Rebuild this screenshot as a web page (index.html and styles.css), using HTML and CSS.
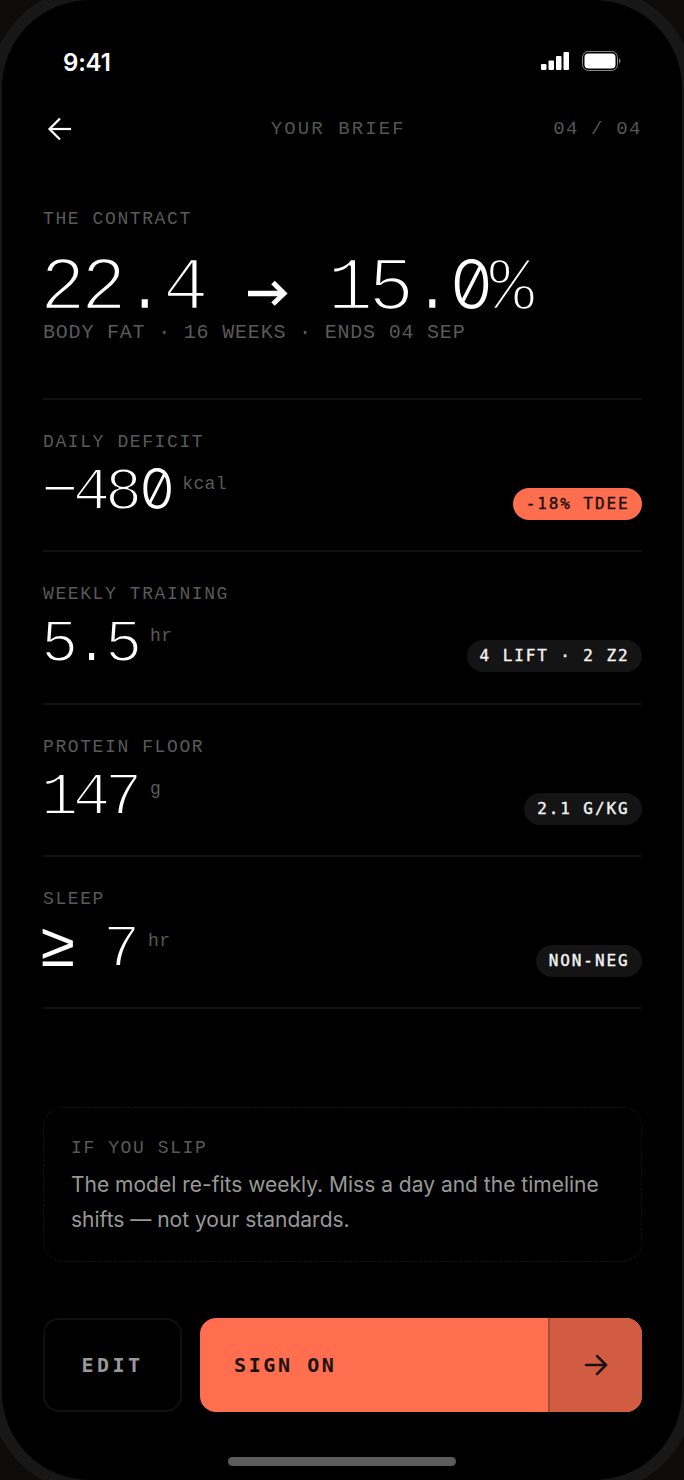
FILE: index.html
```html
<!DOCTYPE html>
<html lang="en">
<head>
  <meta charset="UTF-8">
  <meta name="viewport" content="width=device-width, initial-scale=1.0">
  <title>Your brief</title>
  <link rel="stylesheet" href="styles.css">
</head>
<body>
  <div class="bezel">
    <div class="screen">
      <div class="status">
        <span class="clock">9:41</span>
        <svg class="status-icons" width="80" height="20" viewBox="0 0 80 20">
          <rect x="0" y="13" width="5.500" height="6" rx="1" fill="#fff"/>
          <rect x="7.500" y="9.500" width="5.500" height="9.500" rx="1" fill="#fff"/>
          <rect x="15" y="5" width="5.500" height="14" rx="1" fill="#fff"/>
          <rect x="22.500" y="1" width="5.500" height="18" rx="1" fill="#fff"/>
          <rect x="41.500" y="0.500" width="35" height="19" rx="6" fill="none" stroke="#888"/>
          <rect x="43.500" y="2.500" width="31" height="15" rx="4" fill="#fff"/>
          <path d="M78 7.500v5c1-.4 1.500-1.400 1.500-2.500S79 7.900 78 7.500z" fill="#888"/>
        </svg>
      </div>

      <div class="nav">
        <svg class="back" width="26" height="26" viewBox="0 0 26 26" fill="none" stroke="#fff" stroke-width="2.200">
          <path d="M24 13H3"/>
          <path d="M13 2.500L2.500 13 13 23.500"/>
        </svg>
        <span class="nav-title">YOUR BRIEF</span>
        <span class="nav-step">04 / 04</span>
      </div>

      <div class="contract">
        <div class="label">THE CONTRACT</div>
        <div class="hero">22.4 <svg class="hero-arrow" width="41" height="26" viewBox="0 0 41 26" fill="none" stroke="#fff"><path d="M1 13.500H37" stroke-width="5.500"/><path d="M26 2.500L37 13.500 26 24" stroke-width="5"/></svg> 15.<span class="zero">0</span>%</div>
        <div class="hero-sub">BODY FAT · 16 WEEKS · ENDS 04 SEP</div>
      </div>

      <div class="row">
        <div class="label">DAILY DEFICIT</div>
        <div class="row-body">
          <div class="value">−48<span class="zero">0</span><span class="unit">kcal</span></div>
          <span class="pill pill-hot">-18% TDEE</span>
        </div>
      </div>
      <div class="row">
        <div class="label">WEEKLY TRAINING</div>
        <div class="row-body">
          <div class="value">5.5<span class="unit">hr</span></div>
          <span class="pill">4 LIFT · 2 Z2</span>
        </div>
      </div>
      <div class="row">
        <div class="label">PROTEIN FLOOR</div>
        <div class="row-body">
          <div class="value">147<span class="unit">g</span></div>
          <span class="pill">2.1 G/KG</span>
        </div>
      </div>
      <div class="row">
        <div class="label">SLEEP</div>
        <div class="row-body">
          <div class="value"><span class="geq">≥</span> 7<span class="unit">hr</span></div>
          <span class="pill">NON-NEG</span>
        </div>
      </div>

      <div class="slip">
        <div class="label">IF YOU SLIP</div>
        <p>The model re-fits weekly. Miss a day and the timeline shifts — not your standards.</p>
      </div>

      <div class="actions">
        <button class="btn-edit">EDIT</button>
        <button class="btn-sign">
          <span class="sign-text">SIGN ON</span>
          <span class="sign-arrow">
            <svg width="24" height="24" viewBox="0 0 24 24" fill="none" stroke="#1a1210" stroke-width="2.500" stroke-linecap="round" stroke-linejoin="round">
              <path d="M2 12h20"/>
              <path d="M13 3l9 9-9 9"/>
            </svg>
          </span>
        </button>
      </div>

      <div class="home-bar"></div>
    </div>
  </div>
</body>
</html>
```

FILE: styles.css
```css
html, body { height: 100%; margin: 0; overflow: hidden; }
body { background: #0e0c0b; font-family: 'Liberation Mono', monospace; }
button { cursor: pointer; font-family: inherit; border: none; padding: 0; }

/* phone frame runs past the window edges */
.bezel {
  width: 680px; height: 1480px; margin: -12px 0 0 -10px; padding: 12px;
  background: #171717; border-radius: 100px;
}
.screen {
  height: 100%; background: #000; border-radius: 88px; box-sizing: border-box;
  padding: 0 40.500px 0 41px; display: flex; flex-direction: column; color: #fff;
}

.status { display: flex; justify-content: space-between; align-items: center; height: 24px; margin-top: 50px; padding: 0 0 0 20px; }
.clock { font: 600 24px 'Inter', sans-serif; letter-spacing: -0.2px; }
.status-icons { margin-right: 21px; margin-top: -2px; }

.nav { display: grid; grid-template-columns: 1fr auto 1fr; align-items: center; height: 30px; margin-top: 40px; }
.back { margin-left: 4px; }
.nav-title { font-size: 19px; letter-spacing: 2.100px; color: #555; margin-left: -8px; }
.nav-step { font-size: 19px; letter-spacing: 1.200px; color: #555; justify-self: end; }

.label { font-size: 18px; line-height: 20px; letter-spacing: 1.600px; color: #5a5a5a; }

.contract { margin-top: 65px; height: 191px; border-bottom: 2px solid #101010; box-sizing: border-box; }
.hero {
  font-size: 76px; line-height: 66px; letter-spacing: -4.600px; margin: 22px 0 0 -3px;
  white-space: pre; -webkit-text-stroke: 2.600px #000; paint-order: fill stroke;
}
.hero-arrow { vertical-align: 3px; margin: 0 -1.600px 0 2px; }
.zero {
  display: inline-block; width: 41px; font-family: 'Inter', sans-serif; font-weight: 300;
  font-size: 68px; letter-spacing: -2px; -webkit-text-stroke: 0; font-feature-settings: "tnum", "zero";
  margin-right: -1.400px; margin-left: -1px;
}
.hero-sub { font-size: 20px; line-height: 22px; letter-spacing: 0.800px; color: #5a5a5a; }

.row { height: 152.300px; box-sizing: border-box; padding-top: 32px; border-bottom: 2px solid #101010; }
.row-body { display: flex; justify-content: space-between; align-items: flex-end; }
.value {
  font-size: 62px; line-height: 60px; letter-spacing: -5.200px; margin: 2px 0 0 -2px;
  -webkit-text-stroke: 2px #000; paint-order: fill stroke;
}
.value .zero { width: 32px; font-size: 56px; letter-spacing: -3px; margin: 0 5.200px 0 2px; }
.geq { font-weight: 400; -webkit-text-stroke: 0; margin-left: -2px; }
.unit {
  font-family: 'Liberation Mono', monospace; font-weight: 400;
  font-size: 18px; letter-spacing: 0.400px; color: #5a5a5a; vertical-align: 20px; margin-left: 13px; -webkit-text-stroke: 0;
}
.value .zero + .unit { margin-left: 6px; }
.pill {
  font-family: 'DejaVu Sans Mono', monospace; font-size: 16px; line-height: 32px; height: 32px; letter-spacing: 1.900px;
  background: #141414; color: #f2f2f2; border-radius: 16px; padding: 0 12px 0 13px; margin-bottom: 3px;
  -webkit-text-stroke: 0.400px currentColor;
}
.pill-hot { background: #ff6e4e; color: #1a1210; }

.slip {
  margin-top: 98px; height: 155px; box-sizing: border-box; padding: 30px 27px 0;
  border: 1px dashed #151515; border-radius: 20px;
}
.slip p { margin: 9px 0 0; font: 400 21px/35px 'Inter', sans-serif; color: #999; }

.actions { display: flex; gap: 18px; height: 94px; margin-top: 56px; }
.btn-edit {
  width: 139px; box-sizing: border-box; background: #000; border: 2px solid #101010; border-radius: 16px;
  color: #999; font-family: 'DejaVu Sans Mono', monospace; font-size: 20px; font-weight: 700; letter-spacing: 3.400px;
}
.btn-sign {
  flex: 1; display: flex; background: #ff6e4e; border-radius: 16px; overflow: hidden; color: #1a1210;
}
.sign-text { flex: 1; text-align: left; padding-left: 34px; font-family: 'DejaVu Sans Mono', monospace; font-size: 20px; font-weight: 700; letter-spacing: 2.600px; line-height: 94px; }
.sign-arrow {
  width: 94px; display: flex; align-items: center; justify-content: center;
  background: #d15c42; border-left: 2px solid #a94a35; box-sizing: border-box;
}

.home-bar { width: 228px; height: 9px; background: #5c5c5c; border-radius: 5px; margin: 45px auto 0; }
```
